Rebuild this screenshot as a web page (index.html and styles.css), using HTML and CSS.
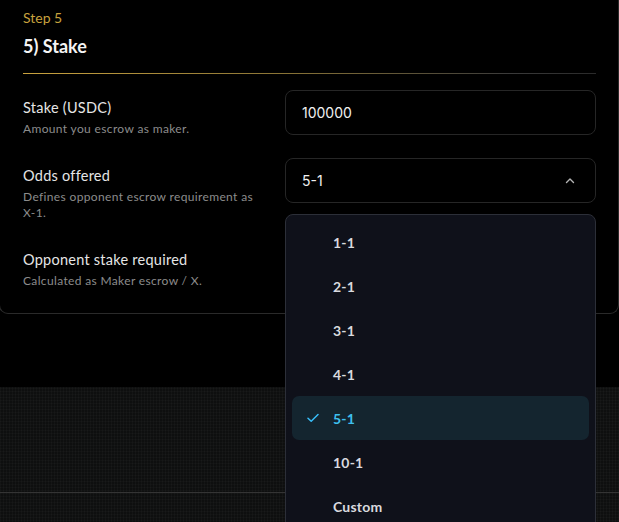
FILE: index.html
```html
<!DOCTYPE html>
<html>
<head>
<meta charset="utf-8">
<link rel="stylesheet" href="styles.css">
</head>
<body>
<div class="page">
  <section class="card">
    <div class="step">Step 5</div>
    <h2 class="title">5) Stake</h2>
    <div class="divider"></div>

    <div class="row">
      <div class="info">
        <div class="label">Stake (USDC)</div>
        <div class="desc">Amount you escrow as maker.</div>
      </div>
      <div class="field"><span class="value">100000</span></div>
    </div>

    <div class="row">
      <div class="info">
        <div class="label">Odds offered</div>
        <div class="desc">Defines opponent escrow requirement as X-1.</div>
      </div>
      <div class="select-wrap">
        <div class="field select">
          <span class="value">5-1</span>
          <svg class="chev" width="10" height="10" viewBox="0 0 10 10"><path d="M1.5 6.5 L5 3 L8.5 6.5" fill="none" stroke="#b5b5b5" stroke-width="1.4" stroke-linecap="round" stroke-linejoin="round"/></svg>
        </div>
        <ul class="menu">
          <li class="opt">1-1</li>
          <li class="opt">2-1</li>
          <li class="opt">3-1</li>
          <li class="opt">4-1</li>
          <li class="opt selected"><svg class="check" width="12" height="10" viewBox="0 0 12 10"><path d="M1 5.2 L4.2 8.3 L11 1.5" fill="none" stroke="#38bdf8" stroke-width="1.5" stroke-linecap="round" stroke-linejoin="round"/></svg>5-1</li>
          <li class="opt">10-1</li>
          <li class="opt">Custom</li>
        </ul>
      </div>
    </div>

    <div class="row last">
      <div class="info">
        <div class="label">Opponent stake required</div>
        <div class="desc">Calculated as Maker escrow / X.</div>
      </div>
      <div class="field ghost"></div>
    </div>
  </section>

  <div class="gap"></div>
  <footer class="texture">
    <div class="tline"></div>
  </footer>
</div>
</body>
</html>
```

FILE: styles.css
```css
* { box-sizing: border-box; }
html, body { margin: 0; padding: 0; background: #000; }
body {
  font-family: "Lato", "Noto Sans", sans-serif;
  color: #eaeaea;
  width: 619px;
  height: 522px;
  overflow: hidden;
}
.page { display: flex; flex-direction: column; }

.card {
  width: 620px;
  margin-left: -1px;
  border: 1px solid #2a2a2a;
  border-top: none;
  border-radius: 0 0 9px 9px;
  padding: 8px 22px 24px 23px;
  background: #000;
}
.step {
  color: #c9a23e;
  font-size: 14px;
  line-height: 20px;
}
.title {
  margin: 6px 0 0;
  font-size: 18px;
  font-weight: 700;
  line-height: 24px;
  color: #f4f4f4;
}
.divider {
  height: 1px;
  margin-top: 15px;
  background: linear-gradient(90deg, #c9a23e 0%, #8a7436 45%, #3a3a3a 85%, #2a2a2a 100%);
  margin-bottom: 16px;
}

.row {
  display: grid;
  grid-template-columns: 1fr 311px;
  column-gap: 16px;
  margin-bottom: 21px;
}
.row.last { margin-bottom: 0; }
.info { padding-top: 9px; }
.label {
  font-size: 14.5px;
  letter-spacing: 0.25px;
  line-height: 18px;
  color: #e6e6e6;
}
.desc {
  margin-top: 4px;
  font-size: 12px;
  letter-spacing: 0.35px;
  line-height: 16px;
  color: #8c8c8c;
}

.field {
  height: 45px;
  border: 1px solid #262626;
  border-radius: 8px;
  background: #000;
  display: flex;
  align-items: center;
  padding: 0 16px;
}
.field.ghost { border-color: transparent; }
.value {
  font-family: "Inter", "Liberation Sans", sans-serif;
  font-size: 14px;
  color: #f0f0f0;
}
.select { justify-content: space-between; }
.chev { margin-right: 4px; }

.select-wrap { position: relative; }
.menu {
  position: absolute;
  z-index: 5;
  top: 56px;
  left: 0;
  width: 311px;
  height: 330px;
  margin: 0;
  padding: 5px 6px;
  list-style: none;
  background: #0f111a;
  border: 1px solid #2c2f38;
  border-radius: 8px;
}
.opt {
  height: 44px;
  display: flex;
  align-items: center;
  padding-left: 41px;
  position: relative;
  font-size: 14px;
  font-weight: 700;
  letter-spacing: 0.2px;
  color: #d9dadf;
  border-radius: 7px;
}
.opt.selected {
  background: #14252f;
  color: #3ec0ef;
}
.check {
  position: absolute;
  left: 15px;
  top: 17px;
}

.gap { height: 73px; background: #000; }
.texture {
  height: 140px;
  background-color: #0e0f0f;
  background-image:
    repeating-linear-gradient(90deg, rgba(255,255,255,0.025) 0 1px, transparent 1px 3px),
    repeating-linear-gradient(0deg, rgba(255,255,255,0.02) 0 1px, transparent 1px 3px);
  padding-top: 105px;
}
.tline { height: 1px; background: #343434; }
```
